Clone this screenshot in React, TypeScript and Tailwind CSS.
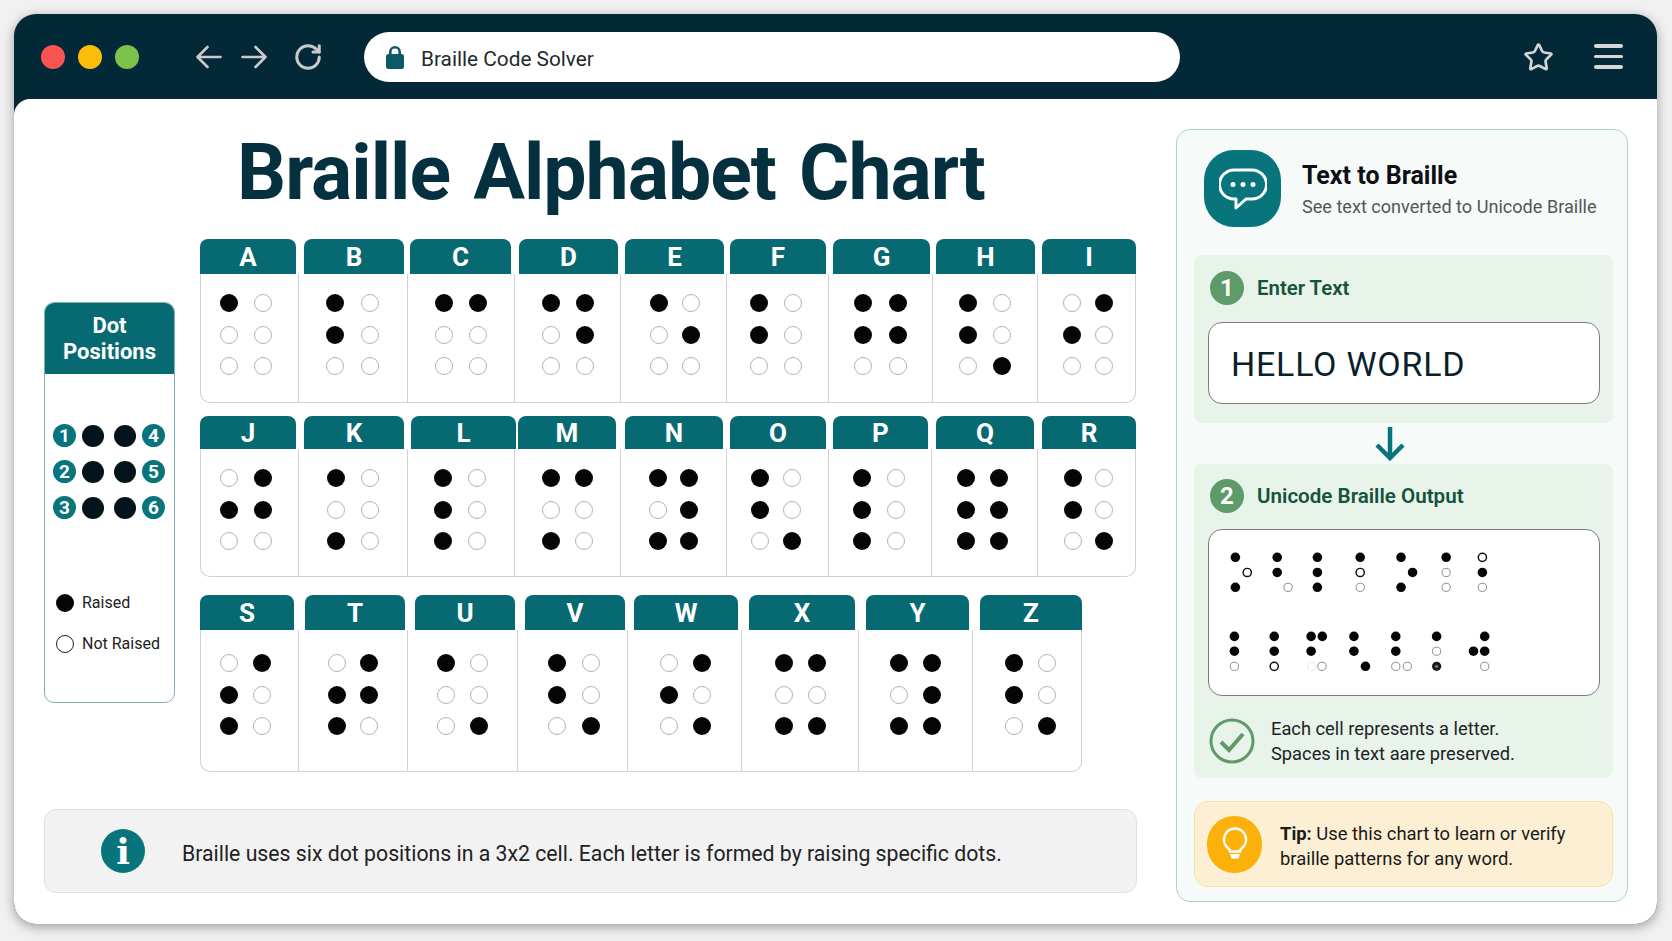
import { RotateCw, Star } from 'lucide-react';

type Cell = { l: string; x: [number, number]; h: [number, number]; d: [number, number]; p: string };

const row1: Cell[] = [
  { l: 'A', x: [200, 298], h: [200, 296], d: [229, 263], p: '100000' },
  { l: 'B', x: [298, 407], h: [304, 404], d: [335, 370], p: '101000' },
  { l: 'C', x: [407, 514], h: [410, 511], d: [444, 478], p: '110000' },
  { l: 'D', x: [514, 620], h: [519, 618], d: [551, 585], p: '110100' },
  { l: 'E', x: [620, 726], h: [625, 724], d: [659, 691], p: '100100' },
  { l: 'F', x: [726, 828], h: [730, 826], d: [759, 793], p: '101000' },
  { l: 'G', x: [828, 932], h: [833, 930], d: [863, 898], p: '111100' },
  { l: 'H', x: [932, 1037], h: [936, 1035], d: [968, 1002], p: '101001' },
  { l: 'I', x: [1037, 1136], h: [1042, 1136], d: [1072, 1104], p: '011000' },
];

const row2: Cell[] = [
  { l: 'J', x: [200, 298], h: [200, 296], d: [229, 263], p: '011100' },
  { l: 'K', x: [298, 407], h: [304, 404], d: [336, 370], p: '100010' },
  { l: 'L', x: [407, 514], h: [411, 516], d: [443, 477], p: '101010' },
  { l: 'M', x: [514, 620], h: [518, 616], d: [551, 584], p: '110010' },
  { l: 'N', x: [620, 726], h: [625, 723], d: [658, 689], p: '110111' },
  { l: 'O', x: [726, 828], h: [730, 826], d: [760, 792], p: '101001' },
  { l: 'P', x: [828, 931], h: [833, 928], d: [862, 896], p: '101010' },
  { l: 'Q', x: [931, 1037], h: [936, 1034], d: [966, 999], p: '111111' },
  { l: 'R', x: [1037, 1136], h: [1042, 1136], d: [1073, 1104], p: '101001' },
];

const row3: Cell[] = [
  { l: 'S', x: [200, 298], h: [200, 294], d: [229, 262], p: '011010' },
  { l: 'T', x: [298, 407], h: [305, 405], d: [337, 369], p: '011110' },
  { l: 'U', x: [407, 517], h: [415, 515], d: [446, 479], p: '100001' },
  { l: 'V', x: [517, 627], h: [525, 625], d: [557, 591], p: '101001' },
  { l: 'W', x: [627, 741], h: [634, 738], d: [669, 702], p: '011001' },
  { l: 'X', x: [741, 858], h: [749, 855], d: [784, 817], p: '110011' },
  { l: 'Y', x: [858, 972], h: [866, 969], d: [899, 932], p: '110111' },
  { l: 'Z', x: [972, 1082], h: [980, 1082], d: [1014, 1047], p: '101001' },
];

// dots of the output box, in 3x crop coordinates: x, y, kind (f filled, o dark ring, g gray ring, h faint, c filled with a gray centre)
const outputDots: [number, number, string][] = [
  [194, 380, 'f'], [230, 426, 'o'], [194, 471, 'f'],
  [321, 380, 'f'], [321, 426, 'f'], [354, 471, 'g'],
  [443, 380, 'f'], [443, 426, 'f'], [443, 471, 'f'],
  [573, 380, 'f'], [573, 426, 'o'], [573, 471, 'g'],
  [697, 380, 'f'], [732, 426, 'f'], [697, 471, 'f'],
  [834, 380, 'f'], [834, 426, 'g'], [834, 471, 'g'],
  [944, 380, 'o'], [944, 426, 'f'], [944, 471, 'g'],
  [191, 620, 'f'], [191, 665, 'f'], [191, 711, 'g'],
  [312, 620, 'f'], [312, 665, 'f'], [312, 711, 'o'],
  [424, 620, 'f'], [458, 620, 'f'], [424, 665, 'f'], [426, 711, 'h'], [457, 711, 'g'],
  [554, 620, 'f'], [554, 665, 'f'], [589, 711, 'f'],
  [681, 620, 'f'], [681, 665, 'f'], [681, 711, 'g'], [716, 711, 'g'],
  [805, 620, 'f'], [805, 665, 'g'], [805, 711, 'c'],
  [951, 620, 'f'], [917, 665, 'f'], [951, 665, 'f'], [951, 711, 'g'],
];

function Dot({ on }: { on: boolean }) {
  return on ? (
    <span className="block h-[18px] w-[18px] rounded-full bg-[#050505]" />
  ) : (
    <span className="block h-[18px] w-[18px] rounded-full border-[1.5px] border-[#b4b4b4] bg-white" />
  );
}

function LetterRow({ cells, headerH, bodyH, dotTop, className }: { cells: Cell[]; headerH: string; bodyH: string; dotTop: string; className?: string }) {
  return (
    <div className={`flex ${className ?? ''}`}>
      {cells.map((c, i) => (
        <div key={c.l} className="flex flex-col" style={{ width: c.x[1] - c.x[0] }}>
          <div
            className={`flex items-center justify-center rounded-t-[8px] bg-[#076a72] pt-[2px] text-[26px] font-bold text-white font-[Roboto,sans-serif] ${headerH}`}
            style={{ marginLeft: c.h[0] - c.x[0], width: c.h[1] - c.h[0] }}
          >
            {c.l}
          </div>
          <div
            className={`border-b-[1.5px] border-l-[1.5px] border-[#d2d2d2] bg-white ${dotTop} ${bodyH} ${i === 0 ? 'rounded-bl-[10px]' : ''} ${i === cells.length - 1 ? 'rounded-br-[10px] border-r-[1.5px]' : ''}`}
            style={{ paddingLeft: c.d[0] - c.x[0] - 10.5 }}
          >
            <div className="grid w-fit grid-cols-2 gap-y-[13.5px]" style={{ columnGap: c.d[1] - c.d[0] - 18 }}>
              {c.p.split('').map((v, k) => (
                <Dot key={k} on={v === '1'} />
              ))}
            </div>
          </div>
        </div>
      ))}
    </div>
  );
}

function NumBadge({ n }: { n: number }) {
  return (
    <span className="flex h-[23px] w-[23px] items-center justify-center rounded-full bg-[#08747b] text-[19px] font-bold leading-none text-white">
      {n}
    </span>
  );
}

function StepBadge({ n }: { n: number }) {
  return (
    <span className="flex h-[34px] w-[34px] items-center justify-center rounded-full bg-[#5e9a6a] text-[24px] font-bold leading-none text-white">
      {n}
    </span>
  );
}

export default function App() {
  return (
    <div className="h-[941px] w-[1672px] overflow-hidden bg-[#f1f1f1] pl-[14px] pt-[14px] font-[Roboto,sans-serif]">
      <div className="flex h-[910px] w-[1643px] flex-col overflow-hidden rounded-[22px] bg-[#032939] shadow-[0_3px_12px_rgba(0,0,0,0.35)]">
        <header className="flex h-[85px] shrink-0 items-center pl-[27px] pr-[34px]">
          <div className="flex items-center gap-[13px]">
            <span className="h-[24px] w-[24px] rounded-full bg-[#f9544f]" />
            <span className="h-[24px] w-[24px] rounded-full bg-[#fdbd0b]" />
            <span className="h-[24px] w-[24px] rounded-full bg-[#7cc34b]" />
          </div>
          <svg className="ml-[57px]" width="26" height="24" viewBox="0 0 26 24" fill="none" stroke="#c9c9c9" strokeWidth="2.6" strokeLinecap="round" strokeLinejoin="round">
            <path d="M24.5 12H2M11.5 2 1.5 12l10 10" />
          </svg>
          <svg className="ml-[19px]" width="26" height="24" viewBox="0 0 26 24" fill="none" stroke="#c9c9c9" strokeWidth="2.6" strokeLinecap="round" strokeLinejoin="round">
            <path d="M1.5 12H24M14.500 2l10 10-10 10" />
          </svg>
          <RotateCw className="ml-[26px] text-[#c9c9c9]" size={30} strokeWidth={2.4} />
          <div className="ml-[41px] flex h-[50px] w-[816px] items-center rounded-full bg-white pl-[22px]">
            <svg width="18" height="24" viewBox="0 0 18 24" fill="#0d5a67">
              <path d="M3 10V7a6 6 0 0 1 12 0v3h-2.600V7a3.400 3.400 0 0 0-6.800 0v3z" />
              <rect x="0" y="9" width="18" height="15" rx="2.500" />
            </svg>
            <span className="ml-[17px] pt-[6px] text-[20.800px] text-[#1d2a30]">Braille Code Solver</span>
          </div>
          <Star className="ml-auto mt-[2px] text-[#d4d4d4]" size={31} strokeWidth={2.1} />
          <div className="ml-[40px] flex w-[29px] flex-col gap-[7px]">
            <span className="h-[3.5px] rounded-full bg-[#d6d6d6]" />
            <span className="h-[3.5px] rounded-full bg-[#d6d6d6]" />
            <span className="h-[3.5px] rounded-full bg-[#d6d6d6]" />
          </div>
        </header>

        <main className="flex flex-1 gap-[39px] rounded-tl-[16px] bg-white pl-[30px] pt-0">
          <section className="w-[1093px]">
            <h1 className="flex h-[140px] items-center pl-[193px] pt-[8px] text-[77px] font-bold leading-none tracking-[-1px] text-[#05303f] [word-spacing:5px]">
              Braille Alphabet Chart
            </h1>
            <div className="flex gap-[25px]">
              <aside className="mt-[63px] flex h-[401px] w-[131px] flex-col overflow-hidden rounded-[10px] border-[1.5px] border-[#7fb2b6] bg-white">
                <div className="flex h-[71px] shrink-0 items-center justify-center bg-[#076a72] text-center text-[22px] font-bold leading-[26px] text-white">
                  <span>
                    Dot
                    <br />
                    Positions
                  </span>
                </div>
                <div className="mt-[50px] flex flex-col gap-[13px] pl-[8px]">
                  {[
                    [1, 4],
                    [2, 5],
                    [3, 6],
                  ].map(([a, b]) => (
                    <div key={a} className="flex items-center gap-[6px]">
                      <NumBadge n={a} />
                      <span className="h-[22px] w-[22px] rounded-full bg-[#04141c]" />
                      <span className="ml-[4px] h-[22px] w-[22px] rounded-full bg-[#04141c]" />
                      <NumBadge n={b} />
                    </div>
                  ))}
                </div>
                <div className="ml-[11px] mt-[72px] flex items-center gap-[8px] text-[16px] leading-[24px] text-[#222]">
                  <span className="h-[18px] w-[18px] rounded-full bg-[#050505]" />
                  Raised
                </div>
                <div className="ml-[11px] mt-[17px] flex items-center gap-[8px] text-[16px] leading-[24px] text-[#222]">
                  <span className="h-[18px] w-[18px] rounded-full border-[1.5px] border-[#222] bg-white" />
                  Not Raised
                </div>
              </aside>
              <div className="w-[936px]">
                <LetterRow cells={row1} headerH="h-[35px]" bodyH="h-[129px]" dotTop="pt-[20px]" />
                <LetterRow cells={row2} headerH="h-[33px]" bodyH="h-[128px]" dotTop="pt-[20px]" className="mt-[13px]" />
                <LetterRow cells={row3} headerH="h-[35px]" bodyH="h-[142px]" dotTop="pt-[24px]" className="mt-[18px]" />
              </div>
            </div>
            <div className="mt-[37px] flex h-[84px] items-center rounded-[12px] border-[1.5px] border-[#e0e0e0] bg-[#f2f2f2] pl-[56px]">
              <span className="flex h-[44px] w-[44px] items-center justify-center rounded-full bg-[#08747b] text-[36px] font-bold leading-none text-white font-['DejaVu_Serif',serif]">
                i
              </span>
              <p className="ml-[37px] pt-[6px] text-[21.25px] text-[#222]">Braille uses six dot positions in a 3x2 cell. Each letter is formed by raising specific dots.</p>
            </div>
          </section>

          <aside className="mt-[30px] flex h-[773px] w-[452px] flex-col rounded-[14px] border-[1.5px] border-[#a9d0d4] bg-[#f6fbfa] pl-[17px] pr-[14px] pt-[20px]">
            <div className="flex h-[77px] items-center pl-[10px]">
              <span className="flex h-[77px] w-[77px] shrink-0 items-center justify-center rounded-[30px] bg-[#08747b]">
                <svg width="48" height="42" viewBox="0 0 48 42" fill="none">
                  <path d="M15 2h18a13 13 0 0 1 0 29h-6l-10 9v-9h-2a13 13 0 0 1 0-29z" stroke="#fff" strokeWidth="3" strokeLinejoin="round" />
                  <circle cx="14" cy="16.500" r="2.500" fill="#fff" />
                  <circle cx="24" cy="16.500" r="2.500" fill="#fff" />
                  <circle cx="34" cy="16.500" r="2.500" fill="#fff" />
                </svg>
              </span>
              <div className="ml-[21px] pt-[3px]">
                <div className="text-[25px] font-bold leading-[30px] text-[#0b0f12]">Text to Braille</div>
                <div className="mt-[4px] text-[18.100px] leading-[24px] text-[#555]">See text converted to Unicode Braille</div>
              </div>
            </div>

            <div className="mt-[28px] h-[168px] rounded-[8px] bg-[#e8f3e9] pl-[14px] pr-[13px] pt-[16px]">
              <div className="flex items-center gap-[13px] pl-[2px]">
                <StepBadge n={1} />
                <span className="text-[20.400px] font-semibold text-[#14533c]">Enter Text</span>
              </div>
              <div className="mt-[17px] flex h-[82px] items-center rounded-[14px] border-[1.5px] border-[#7d7d7d] bg-white pl-[22px] pt-[3px] text-[34px] tracking-[0.75px] text-[#0a1f2c]">
                HELLO WORLD
              </div>
            </div>

            <div className="flex h-[41px] items-center justify-center pr-[28px]">
              <svg width="32" height="34" viewBox="0 0 32 34" fill="none" stroke="#08747b" strokeWidth="4.500">
                <path d="M16 0v31M3 18l13 13 13-13" />
              </svg>
            </div>

            <div className="h-[314px] rounded-[8px] bg-[#e8f3e9] pl-[14px] pr-[13px] pt-[15px]">
              <div className="flex items-center gap-[13px] pl-[2px]">
                <StepBadge n={2} />
                <span className="text-[20.600px] font-semibold text-[#14533c]">Unicode Braille Output</span>
              </div>
              <div className="mt-[16px] h-[167px] rounded-[14px] border-[1.5px] border-[#7d7d7d] bg-white">
                <svg className="block h-full w-full" viewBox="118 297 1176 501">
                  {outputDots.map(([x, y, k], i) =>
                    k === 'f' ? (
                      <circle key={i} cx={x} cy={y} r={14.5} fill="#050505" />
                    ) : k === 'c' ? (
                      <g key={i}>
                        <circle cx={x} cy={y} r={14} fill="#1a1a1a" />
                        <circle cx={x} cy={y} r={5} fill="#777" />
                      </g>
                    ) : (
                      <circle
                        key={i}
                        cx={x}
                        cy={y}
                        r={12.5}
                        fill="#fff"
                        stroke={k === 'o' ? '#111' : k === 'g' ? '#8a8a8a' : '#e6e6e6'}
                        strokeWidth={k === 'o' ? 4.5 : 3}
                      />
                    ),
                  )}
                </svg>
              </div>
              <div className="mt-[20px] flex items-center pl-[1px]">
                <svg width="46" height="46" viewBox="0 0 46 46" fill="none" stroke="#5e9a6a">
                  <circle cx="23" cy="23" r="21" strokeWidth="3" />
                  <path d="M12 24l8 8 14-16" strokeWidth="4" />
                </svg>
                <p className="ml-[16px] text-[18.300px] leading-[25px] text-[#1c2226]">
                  Each cell represents a letter.
                  <br />
                  Spaces in text aare preserved.
                </p>
              </div>
            </div>

            <div className="mt-[23px] flex h-[86px] items-center rounded-[14px] border-[1.5px] border-[#fbe0a2] bg-[#fdefd4] pl-[12px]">
              <span className="flex h-[57px] w-[55px] shrink-0 items-center justify-center rounded-full bg-[#fbb00a]">
                <svg width="26" height="34" viewBox="0 0 26 34" fill="none">
                  <path d="M13 1.500a11 11 0 0 0-6.500 19.900c1 .8 1.500 1.700 1.500 3.100h10c0-1.400.5-2.300 1.500-3.100A11 11 0 0 0 13 1.500z" stroke="#fff" strokeWidth="2.500" />
                  <path d="M8 27h10l-1.500 4.500h-7z" fill="#fff" />
                </svg>
              </span>
              <p className="ml-[18px] pt-[4px] text-[18.400px] leading-[25px] text-[#1a1a1a]">
                <b>Tip:</b> Use this chart to learn or verify
                <br />
                braille patterns for any word.
              </p>
            </div>
          </aside>
        </main>
      </div>
    </div>
  );
}
